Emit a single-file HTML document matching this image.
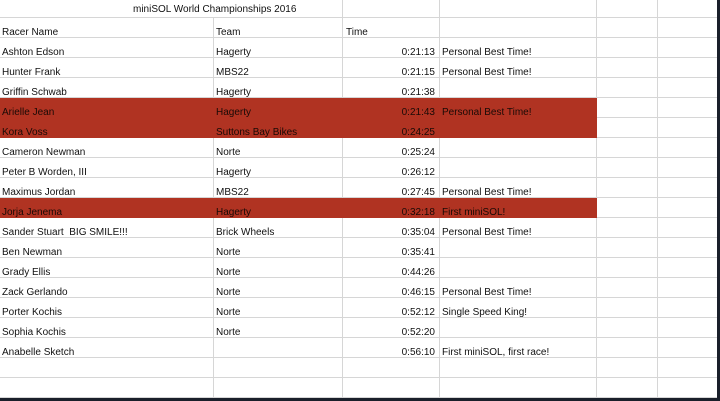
<!DOCTYPE html>
<html><head><style>
body{margin:0;width:720px;height:401px;background:#1a1f2a;overflow:hidden;font-family:"Liberation Sans",sans-serif;font-size:10px;color:#111}
#s{position:absolute;left:0;top:0;width:717px;height:398px;background:#fff;overflow:hidden}
.r{position:absolute;left:0;width:717px;height:20px}
.c{position:absolute;top:0;height:20px;line-height:29px;box-sizing:border-box;border-right:1px solid #d6d6d6;border-bottom:1px solid #d6d6d6;padding-left:2px;white-space:nowrap;overflow:hidden}
.red .c{background:#b03322;border-color:#b03322;color:#1a0a06}
.red .c.e,.red .c.f{border-right-color:#d6d6d6;border-bottom-color:#d6d6d6;background:#fff}
.a{left:0;width:214px}.b{left:214px;width:129px}.t{left:343px;width:97px;text-align:right;padding-right:4px}
.d{left:440px;width:157px}.e{left:597px;width:61px}.f{left:658px;width:59px;border-right:none}
</style></head><body><div id="s">
<div class="r" style="top:-2px;"><div class="c a" style="border-right:none"></div><div class="c b"></div><div class="c t"></div><div class="c d"></div><div class="c e"></div><div class="c f"></div>
<span style="position:absolute;left:133px;top:5px;line-height:14px">miniSOL World Championships 2016</span></div>
<div id="rows"></div>
</div>
<script>
var d=[["Racer Name","Team","","",0,1],["Ashton Edson","Hagerty","0:21:13","Personal Best Time!"],["Hunter Frank","MBS22","0:21:15","Personal Best Time!"],["Griffin Schwab","Hagerty","0:21:38",""],["Arielle Jean","Hagerty","0:21:43","Personal Best Time!",1],["Kora Voss","Suttons Bay Bikes","0:24:25","",1],["Cameron Newman","Norte","0:25:24",""],["Peter B Worden, III","Hagerty","0:26:12",""],["Maximus Jordan","MBS22","0:27:45","Personal Best Time!"],["Jorja Jenema","Hagerty","0:32:18","First miniSOL!",1],["Sander Stuart&nbsp; BIG SMILE!!!","Brick Wheels","0:35:04","Personal Best Time!"],["Ben Newman","Norte","0:35:41",""],["Grady Ellis","Norte","0:44:26",""],["Zack Gerlando","Norte","0:46:15","Personal Best Time!"],["Porter Kochis","Norte","0:52:12","Single Speed King!"],["Sophia Kochis","Norte","0:52:20",""],["Anabelle Sketch","","0:56:10","First miniSOL, first race!"],["","","",""],["","","",""]];
var h="";d.forEach(function(x,i){var y=18+i*20;h+='<div class="r'+(x[4]?' red':'')+'" style="top:'+y+'px"><div class="c a">'+x[0]+'</div><div class="c b">'+x[1]+'</div><div class="c t"'+(x[5]?' style="text-align:left;padding-left:3px"':'')+'>'+(x[5]?'Time':x[2])+'</div><div class="c d">'+x[3]+'</div><div class="c e"></div><div class="c f"></div></div>'});
document.getElementById("rows").innerHTML=h;
</script>
</body></html>
